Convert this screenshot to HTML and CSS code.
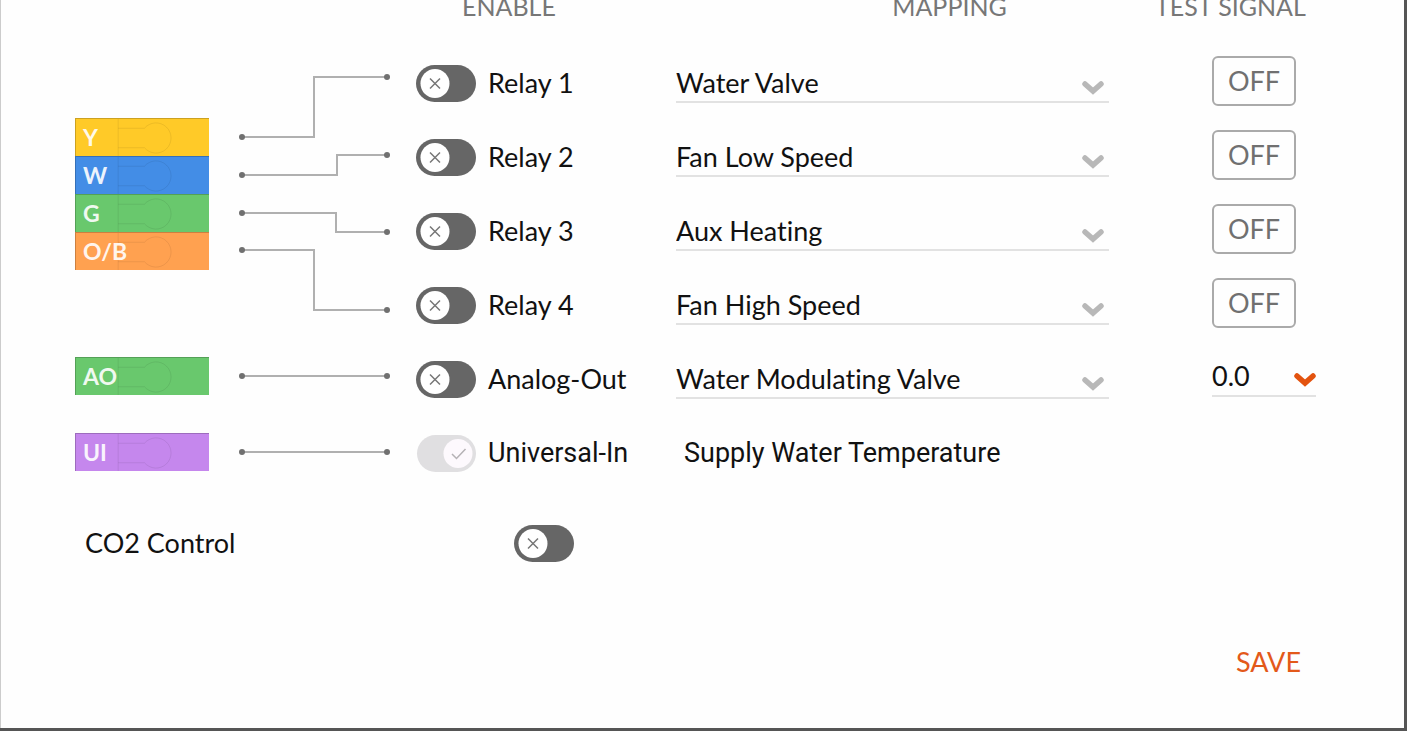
FILE: index.html
```
<!DOCTYPE html>
<html lang="en">
<head>
    <meta charset="UTF-8">
    <meta name="viewport" content="width=device-width, initial-scale=1.0">
    <title>Terminal Setup</title>
    <link rel="stylesheet" href="styles.css">
</head>
<body>
<!-- Shared icons -->
<svg class="icon-defs" aria-hidden="true">
    <symbol id="switch-off" viewBox="0 0 60 38">
        <rect y="1" width="60" height="37" rx="18.5" fill="#666"/>
        <circle cx="19" cy="19.5" r="14.5" fill="#fff"/>
        <path d="M14 14.5l10 10M24 14.5l-10 10" stroke="#777" stroke-width="1.5" fill="none"/>
    </symbol>
    <symbol id="switch-on" viewBox="0 0 60 38">
        <rect x="1" y="1" width="59" height="37" rx="18.5" fill="#e0dfe1"/>
        <circle cx="42" cy="19.5" r="14.5" fill="#fdf9fd"/>
        <path d="M36 20l4.500 4.500 9-9.500" stroke="#b5b2b5" stroke-width="1.5" fill="none"/>
    </symbol>
    <symbol id="chevron" viewBox="0 0 22 14">
        <path d="M3 3l8 7 8-7" stroke="currentColor" stroke-width="5.5" stroke-linecap="round" fill="none"/>
    </symbol>
    <symbol id="slot" viewBox="0 0 134 38">
        <path d="M42 0v38M42 9.5h27a15.5 15.5 0 1 1 0 20H42" stroke="#000" stroke-opacity=".08" fill="none"/>
    </symbol>
</svg>

<main class="panel">
    <!-- Column headings -->
    <div class="headings">
        <div class="heading-enable">ENABLE</div>
        <div class="heading-mapping">MAPPING</div>
        <div class="heading-test">TEST SIGNAL</div>
    </div>

    <div class="board">
        <!-- Wiring terminals -->
        <div class="terminals">
            <div class="terminal-block">
                <div class="terminal yellow"><svg><use href="#slot"/></svg><span>Y</span></div>
                <div class="terminal blue"><svg><use href="#slot"/></svg><span>W</span></div>
                <div class="terminal green"><svg><use href="#slot"/></svg><span>G</span></div>
                <div class="terminal orange"><svg><use href="#slot"/></svg><span>O/B</span></div>
            </div>
            <div class="terminal green"><svg><use href="#slot"/></svg><span>AO</span></div>
            <div class="terminal purple"><svg><use href="#slot"/></svg><span>UI</span></div>
        </div>

        <!-- Wires from terminals to relays -->
        <svg class="wires" viewBox="0 0 207 444" aria-hidden="true">
            <g class="wire-lines">
                <path d="M33 91h72V31h73"/>
                <path d="M33 129h95v-20h50"/>
                <path d="M33 167h94v19h51"/>
                <path d="M33 204h72v60h73"/>
                <path d="M33 330h145"/>
                <path d="M33 406h145"/>
            </g>
            <g class="wire-ends">
                <circle cx="33" cy="91" r="3"/><circle cx="178" cy="31" r="3"/>
                <circle cx="33" cy="129" r="3"/><circle cx="178" cy="109" r="3"/>
                <circle cx="33" cy="167" r="3"/><circle cx="178" cy="186" r="3"/>
                <circle cx="33" cy="204" r="3"/><circle cx="178" cy="264" r="3"/>
                <circle cx="33" cy="330" r="3"/><circle cx="178" cy="330" r="3"/>
                <circle cx="33" cy="406" r="3"/><circle cx="178" cy="406" r="3"/>
            </g>
        </svg>

        <!-- Relay settings -->
        <div class="rows">
            <div class="row">
                <label class="toggle"><input type="checkbox"><svg class="off"><use href="#switch-off"/></svg><svg class="on"><use href="#switch-on"/></svg>Relay 1</label>
                <div class="dropdown">
                    <select aria-label="Relay 1 mapping"><option>Water Valve</option></select>
                    <svg><use href="#chevron"/></svg>
                </div>
                <div class="test"><button class="test-button">OFF</button></div>
            </div>
            <div class="row">
                <label class="toggle"><input type="checkbox"><svg class="off"><use href="#switch-off"/></svg><svg class="on"><use href="#switch-on"/></svg>Relay 2</label>
                <div class="dropdown">
                    <select aria-label="Relay 2 mapping"><option>Fan Low Speed</option></select>
                    <svg><use href="#chevron"/></svg>
                </div>
                <div class="test"><button class="test-button">OFF</button></div>
            </div>
            <div class="row">
                <label class="toggle"><input type="checkbox"><svg class="off"><use href="#switch-off"/></svg><svg class="on"><use href="#switch-on"/></svg>Relay 3</label>
                <div class="dropdown">
                    <select aria-label="Relay 3 mapping"><option>Aux Heating</option></select>
                    <svg><use href="#chevron"/></svg>
                </div>
                <div class="test"><button class="test-button">OFF</button></div>
            </div>
            <div class="row">
                <label class="toggle"><input type="checkbox"><svg class="off"><use href="#switch-off"/></svg><svg class="on"><use href="#switch-on"/></svg>Relay 4</label>
                <div class="dropdown">
                    <select aria-label="Relay 4 mapping"><option>Fan High Speed</option></select>
                    <svg><use href="#chevron"/></svg>
                </div>
                <div class="test"><button class="test-button">OFF</button></div>
            </div>
            <div class="row">
                <label class="toggle"><input type="checkbox"><svg class="off"><use href="#switch-off"/></svg><svg class="on"><use href="#switch-on"/></svg>Analog-Out</label>
                <div class="dropdown">
                    <select aria-label="Analog-Out mapping"><option>Water Modulating Valve</option></select>
                    <svg><use href="#chevron"/></svg>
                </div>
                <div class="test">
                    <div class="dropdown active">
                        <select aria-label="Analog-Out test signal"><option>0.0</option></select>
                        <svg><use href="#chevron"/></svg>
                    </div>
                </div>
            </div>
            <div class="row input-row">
                <label class="toggle"><input type="checkbox" checked disabled><svg class="off"><use href="#switch-off"/></svg><svg class="on"><use href="#switch-on"/></svg>Universal-In</label>
                <div class="fixed-mapping">Supply Water Temperature</div>
            </div>
        </div>
    </div>

    <!-- CO2 -->
    <div class="co2">
        <label for="co2">CO2 Control</label>
        <label class="toggle"><input type="checkbox" id="co2"><svg class="off"><use href="#switch-off"/></svg><svg class="on"><use href="#switch-on"/></svg></label>
    </div>

    <div class="actions">
        <button class="save">SAVE</button>
    </div>
</main>
</body>
</html>
```

FILE: styles.css
```
* {
    box-sizing: border-box;
}

body {
    margin: 0;
    background: #555;
    color: #111;
    font-family: Lato, "Liberation Sans", sans-serif;
    font-size: 27px;
    line-height: 36px;
    font-variant-ligatures: none;
}

button, select {
    font: inherit;
    color: inherit;
    background: none;
    border: none;
    padding: 0;
    cursor: pointer;
}

.icon-defs {
    display: none;
}

/* Main panel */
.panel {
    min-height: calc(100vh - 3px);
    margin-right: 3px;
    padding: 0 88px 0 74px;
    border-left: 1px solid #ccc;
    background: #fefefe;
    overflow: hidden;
}

/* Column headings */
.headings {
    display: grid;
    grid-template-columns: 260px 1fr 163px;
    margin-top: -12px;
    margin-bottom: 22px;
    padding-left: 341px;
    color: #777;
    font-size: 25px;
    white-space: nowrap;
}

.heading-enable {
    padding-left: 46px;
}

.heading-mapping {
    padding-left: 70px;
    text-align: center;
}

.heading-test {
    padding-left: 2px;
}

.board {
    display: flex;
}

/* Terminals */
.terminals {
    width: 134px;
    padding-top: 72px;
}

.terminal-block {
    margin-bottom: 87px;
}

.terminal {
    display: grid;
    height: 38px;
    border-top: 1px solid rgba(0, 0, 0, 0.2);
    border-left: 1px solid rgba(0, 0, 0, 0.2);
    color: #fff;
    font-size: 23px;
    font-weight: bold;
}

.terminal svg, .terminal span {
    grid-area: 1 / 1;
}

.terminal svg {
    width: 100%;
    height: 100%;
}

.terminal span {
    padding-left: 7px;
    opacity: 0.9;
}

.terminals > .terminal + .terminal {
    margin-top: 38px;
}

.yellow { background: #ffca28; }
.blue { background: #438de6; }
.green { background: #69c86d; }
.orange { background: #ffa150; }
.purple { background: #c587ed; }

/* Wires */
.wires {
    width: 207px;
    height: 444px;
    flex-shrink: 0;
}

.wire-lines {
    fill: none;
    stroke: #b0b0b0;
    stroke-width: 2;
}

.wire-ends {
    fill: #707070;
}

/* Relay rows */
.rows {
    flex: 1;
}

.row {
    display: grid;
    grid-template-columns: 260px 1fr 207px;
    align-items: center;
    height: 74px;
}

/* Toggle switches */
.toggle {
    display: flex;
    align-items: center;
    cursor: pointer;
}

.toggle input {
    position: absolute;
    opacity: 0;
}

.toggle svg {
    width: 60px;
    height: 38px;
    margin-right: 12px;
}

.toggle .on,
.toggle input:checked ~ .off {
    display: none;
}

.toggle input:checked ~ .on {
    display: block;
}

/* Dropdowns */
.dropdown {
    position: relative;
    border-bottom: 2px solid #e2e2e2;
}

.dropdown select {
    display: block;
    width: 100%;
    height: 38px;
    padding-top: 2px;
    appearance: none;
}

.dropdown svg {
    position: absolute;
    right: 5px;
    bottom: 6px;
    width: 22px;
    height: 14px;
    color: #b8b8b8;
    pointer-events: none;
}

/* Test signal */
.test {
    padding: 0 0 4px 103px;
}

.test-button {
    display: block;
    width: 84px;
    height: 50px;
    border: 2px solid #aaa;
    border-radius: 6px;
    color: #707070;
}

.dropdown.active select {
    padding-top: 0;
}

.dropdown.active svg {
    right: 0;
    bottom: 8px;
    color: #e3530f;
}

/* Universal input */
.input-row {
    font-family: Roboto, "Liberation Sans", sans-serif;
}

.fixed-mapping {
    padding-left: 8px;
}

.co2 {
    display: flex;
    align-items: center;
    margin-top: 34px;
    padding-left: 10px;
}

.co2 label:first-child {
    width: 429px;
}

.actions {
    display: flex;
    justify-content: flex-end;
    margin-top: 82px;
    padding-right: 15px;
}

.save {
    color: #e3591a;
}
```
